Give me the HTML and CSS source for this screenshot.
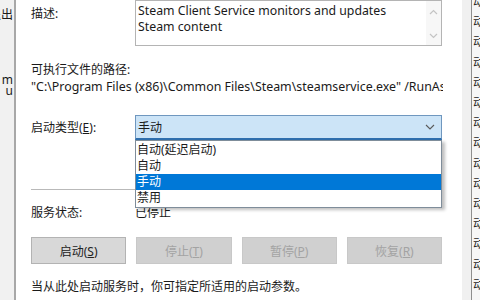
FILE: index.html
```html
<!DOCTYPE html>
<html>
<head lang="zh">
    <meta charset="UTF-8">
    <title>Steam Client Service 属性</title>
    <link rel="stylesheet" href="styles.css">
</head>
<body>
<div class="back-left">
    <div class="bl-line first"><span>退出</span></div>
    <div class="bl-line second"><span>m</span></div>
    <div class="bl-line"><span>u</span></div>
</div>

<div class="dialog">
    <!-- 描述 -->
    <div class="row desc-row">
        <div class="label desc-label">描述:</div>
        <div class="desc-box">
            <div class="desc-text">Steam Client Service monitors and updates<br>Steam content</div>
            <div class="scroll">
                <svg width="9" height="6" viewBox="0 0 9 6"><path d="M1 5 L4.5 1.5 L8 5" fill="none" stroke="#c4c4c4" stroke-width="1.2"/></svg>
                <svg width="9" height="6" viewBox="0 0 9 6"><path d="M1 1 L4.5 4.5 L8 1" fill="none" stroke="#c4c4c4" stroke-width="1.2"/></svg>
            </div>
        </div>
    </div>

    <div class="path-label">可执行文件的路径:</div>
    <div class="path">"C:\Program Files (x86)\Common Files\Steam\steamservice.exe" /RunAsService</div>

    <!-- 启动类型 -->
    <div class="row type-row">
        <div class="label">启动类型(<u>E</u>):</div>
        <div class="combo-wrap">
            <div class="combo">
                <span>手动</span>
                <svg width="10" height="6" viewBox="0 0 10 6"><path d="M1 1 L5 5 L9 1" fill="none" stroke="#5a5a5a" stroke-width="1.1"/></svg>
            </div>
            <ul class="droplist">
                <li>自动(延迟启动)</li>
                <li>自动</li>
                <li class="sel">手动</li>
                <li>禁用</li>
            </ul>
        </div>
    </div>

    <div class="sep"></div>

    <div class="row status-row">
        <div class="label">服务状态:</div>
        <div>已停止</div>
    </div>

    <div class="buttons">
        <button class="btn">启动(<u>S</u>)</button>
        <button class="btn off">停止(<u>T</u>)</button>
        <button class="btn off">暂停(<u>P</u>)</button>
        <button class="btn off">恢复(<u>R</u>)</button>
    </div>

    <div class="hint">当从此处启动服务时，你可指定所适用的启动参数。</div>
</div>

<div class="frame-right"></div>
<div class="back-right">
    <div>动</div><div>动</div><div>动</div><div>动</div><div>动</div>
    <div>动</div><div>动</div><div>动</div><div>动</div><div>动</div>
    <div>动</div><div>动</div><div>动</div><div>动</div><div>动</div>
</div>
</body>
</html>
```

FILE: styles.css
```css
*{
    padding:0;
    margin:0;
    box-sizing: border-box;
}
body{
    width:480px;
    height:300px;
    overflow: hidden;
    display: flex;
    font-family: "Noto Sans", "Noto Sans CJK SC", sans-serif;
    font-size: 12px;
    color: #1a1a1a;
    background: #fff;
}

/* 后面窗口露出的部分 */
.back-left{
    width:16px;
    flex-shrink: 0;
    background: #f1f1f1;
    border-right: 2px solid #a8a8a8;
    overflow: hidden;
}
.bl-line{
    display: flex;
    justify-content: flex-end;
    white-space: nowrap;
    line-height: 11px;
    margin-right: 1px;
}
.bl-line.first{ margin-top: 9px; }
.bl-line.second{ margin-top: 54px; }

.dialog{
    width:446px;
    flex-shrink: 0;
    padding: 0 20px 0 15px;
    background: #fff;
}
.row{
    display: flex;
}
.label{
    width:104px;
    flex-shrink: 0;
    line-height: 16px;
}
.desc-label{
    padding-top: 6px;
}
.desc-box{
    width:307px;
    height:46px;
    border: 1px solid #b4b4b4;
    display: flex;
}
.desc-text{
    flex: 1;
    padding: 2px 0 0 2px;
    line-height: 16px;
    font-size: 12.3px;
    white-space: nowrap;
}
.scroll{
    width:15px;
    background: #f7f7f7;
    display: flex;
    flex-direction: column;
    justify-content: space-between;
    align-items: center;
    padding: 8px 0 6px;
}
.path-label{
    margin-top: 16px;
    line-height: 16px;
}
.path{
    line-height: 16px;
    margin-top: 1px;
    width:412px;
    white-space: nowrap;
    overflow: hidden;
    font-size: 12.4px;
}
.type-row{
    margin-top: 20px;
    align-items: center;
}
.combo-wrap{
    position: relative;
    width:307px;
}
.combo{
    height:25px;
    background: #cce4f7;
    border: 1px solid #6f97bf;
    border-bottom: 2px solid #2f6fae;
    display: flex;
    align-items: center;
    justify-content: space-between;
    padding: 0 6px 0 2px;
}
.droplist{
    position: absolute;
    top:25px;
    left:0;
    width:307px;
    list-style: none;
    background: #fff;
    border: 1px solid #7f8d9a;
    padding: 1px 0;
    box-shadow: 3px 2px 3px rgba(0,0,0,0.25);
    z-index: 2;
}
.droplist li{
    height:16px;
    line-height: 16px;
    padding-left: 1px;
}
.droplist li.sel{
    background: #0078d7;
    color: #fff;
}
.sep{
    margin-top: 49px;
    height:1px;
    background: #b9b9b9;
}
.status-row{
    margin-top: 15px;
    line-height: 16px;
}
.buttons{
    margin-top: 16px;
    display: grid;
    grid-template-columns: repeat(4, 1fr);
    column-gap: 10px;
}
.btn{
    height:27px;
    font-family: "Noto Sans", "Noto Sans CJK SC", sans-serif;
    font-size: 12px;
    color: #222;
    background: #d8d8d8;
    border: 1px solid #b3b3b3;
}
.btn.off{
    color: #a3a3a3;
    background: #d0d0d0;
    border-color: #c8c8c8;
}
.hint{
    margin-top: 15px;
    line-height: 16px;
    white-space: nowrap;
}

.frame-right{
    width:10px;
    flex-shrink: 0;
    background: #f0f0f0;
    border-right: 1px solid #8e8e8e;
}
.back-right{
    flex: 1;
    background: #f6f6f6;
    overflow: hidden;
    line-height: 20.2px;
    margin-top: -8px;
    padding-left: 1px;
}
```
